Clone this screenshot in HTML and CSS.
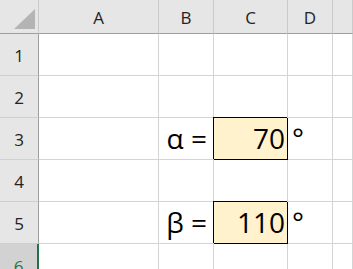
FILE: index.html
```html
<html>
  <head>
    <title>Angles</title>
    <meta name="viewport" content="width=device-width, initial-scale=1.0">
    <link rel="stylesheet" href="styles.css">
  </head>
  <body>
    <div class="sheet">
      <div class="corner">
        <svg width="38" height="33" viewBox="0 0 38 33"><polygon points="35,9 35,29 14,29" fill="#b4b4b4"/></svg>
      </div>
      <div class="col-head">A</div>
      <div class="col-head">B</div>
      <div class="col-head">C</div>
      <div class="col-head">D</div>
      <div class="col-head"></div>

      <div class="row-head">1</div>
      <div class="cell"></div><div class="cell"></div><div class="cell"></div><div class="cell"></div><div class="cell"></div>

      <div class="row-head">2</div>
      <div class="cell"></div><div class="cell"></div><div class="cell"></div><div class="cell"></div><div class="cell"></div>

      <div class="row-head">3</div>
      <div class="cell"></div>
      <div class="cell label">α =</div>
      <div class="cell value">70</div>
      <div class="cell unit">°</div>
      <div class="cell"></div>

      <div class="row-head">4</div>
      <div class="cell"></div><div class="cell"></div><div class="cell"></div><div class="cell"></div><div class="cell"></div>

      <div class="row-head">5</div>
      <div class="cell"></div>
      <div class="cell label">β =</div>
      <div class="cell value">110</div>
      <div class="cell unit">°</div>
      <div class="cell"></div>

      <div class="row-head active">6</div>
      <div class="cell"></div><div class="cell"></div><div class="cell"></div><div class="cell"></div><div class="cell"></div>
    </div>
  </body>
</html>
```

FILE: styles.css
```css
body {
  margin: 0;
  background: #fff;
  overflow: hidden;
}

.sheet {
  display: grid;
  grid-template-columns: 39px 120px 55px 74px 45px 1fr;
  grid-template-rows: 34px repeat(5, 42px) 42px;
  width: 353px;
  height: 269px;
  font-family: "Open Sans", "Noto Sans", sans-serif;
  color: #222;
}

.corner {
  background: #e6e6e6;
  border-right: 1px solid #cacaca;
  border-bottom: 1px solid #9e9e9e;
}

.corner svg {
  display: block;
}

.col-head {
  background: #e6e6e6;
  border-right: 1px solid #cacaca;
  border-bottom: 1px solid #9e9e9e;
  font-size: 17px;
  display: flex;
  align-items: center;
  justify-content: center;
  padding-top: 2px;
}

.row-head {
  background: #e6e6e6;
  border-right: 1px solid #9e9e9e;
  border-bottom: 1px solid #cfcfcf;
  font-size: 17px;
  display: flex;
  align-items: center;
  justify-content: center;
  padding-top: 2px;
}

.row-head.active {
  background: #d2d2d2;
  border-right: 2px solid #217346;
  border-bottom: none;
  color: #217346;
}

.cell {
  border-right: 1px solid #d4d4d4;
  border-bottom: 1px solid #d4d4d4;
  font-size: 28px;
  line-height: 40px;
  color: #000;
  white-space: nowrap;
}

.label {
  text-align: right;
  padding-right: 6px;
}

.value {
  background: #fff2cc;
  border-right-color: #000;
  border-bottom-color: #000;
  box-shadow: -1px -1px 0 0 #000;
  text-align: right;
  padding-right: 2px;
}

.unit {
  padding-left: 4px;
}
```
